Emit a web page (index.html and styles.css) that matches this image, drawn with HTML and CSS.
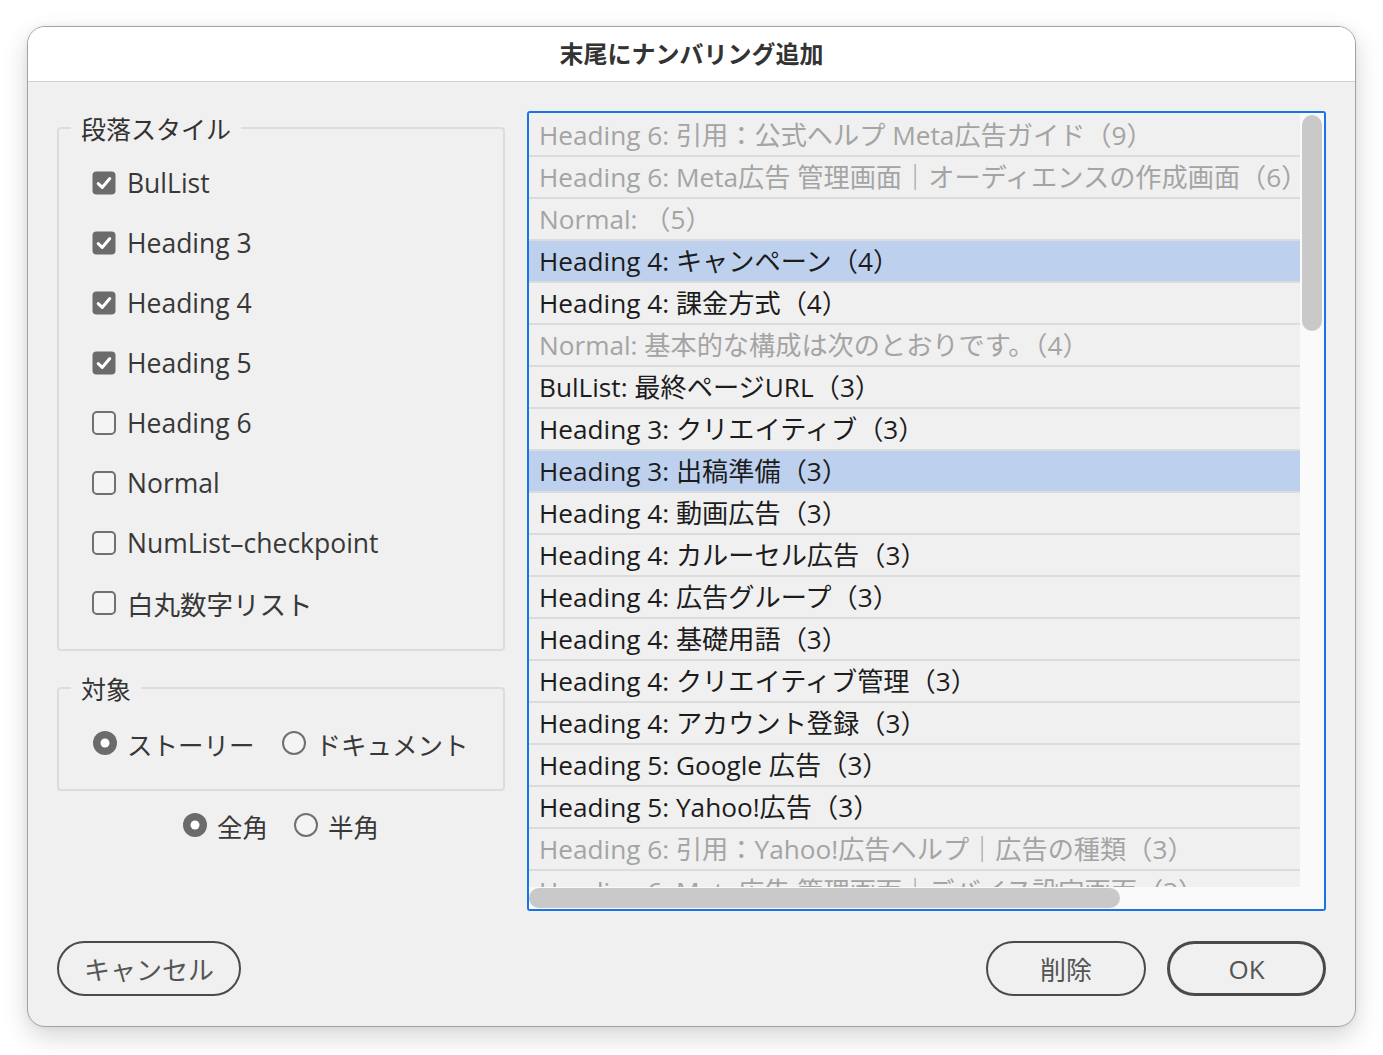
FILE: index.html
```html
<!DOCTYPE html>
<html lang="ja">
<head>
<meta charset="utf-8">
<title>末尾にナンバリング追加</title>
<link rel="stylesheet" href="styles.css">
</head>
<body>
<div class="dialog">
  <div class="titlebar">末尾にナンバリング追加</div>
  <div class="body">
    <div class="main">
      <div class="left">
        <fieldset class="group styles">
          <legend>段落スタイル</legend>
          <label class="check"><span class="box on"><svg viewBox="0 0 24 24" width="24" height="24"><rect x="0.5" y="0.5" width="23" height="23" rx="4" fill="#6b6b6b"/><path d="M6.2 12.6 L10.2 16.4 L17.8 7.6" fill="none" stroke="#fff" stroke-width="3" stroke-linecap="round" stroke-linejoin="round"/></svg></span>BulList</label>
          <label class="check"><span class="box on"><svg viewBox="0 0 24 24" width="24" height="24"><rect x="0.5" y="0.5" width="23" height="23" rx="4" fill="#6b6b6b"/><path d="M6.2 12.6 L10.2 16.4 L17.8 7.6" fill="none" stroke="#fff" stroke-width="3" stroke-linecap="round" stroke-linejoin="round"/></svg></span>Heading 3</label>
          <label class="check"><span class="box on"><svg viewBox="0 0 24 24" width="24" height="24"><rect x="0.5" y="0.5" width="23" height="23" rx="4" fill="#6b6b6b"/><path d="M6.2 12.6 L10.2 16.4 L17.8 7.6" fill="none" stroke="#fff" stroke-width="3" stroke-linecap="round" stroke-linejoin="round"/></svg></span>Heading 4</label>
          <label class="check"><span class="box on"><svg viewBox="0 0 24 24" width="24" height="24"><rect x="0.5" y="0.5" width="23" height="23" rx="4" fill="#6b6b6b"/><path d="M6.2 12.6 L10.2 16.4 L17.8 7.6" fill="none" stroke="#fff" stroke-width="3" stroke-linecap="round" stroke-linejoin="round"/></svg></span>Heading 5</label>
          <label class="check"><span class="box"><svg viewBox="0 0 24 24" width="24" height="24"><rect x="1" y="1" width="22" height="22" rx="4" fill="#f4f4f4" stroke="#707070" stroke-width="2"/></svg></span>Heading 6</label>
          <label class="check"><span class="box"><svg viewBox="0 0 24 24" width="24" height="24"><rect x="1" y="1" width="22" height="22" rx="4" fill="#f4f4f4" stroke="#707070" stroke-width="2"/></svg></span>Normal</label>
          <label class="check"><span class="box"><svg viewBox="0 0 24 24" width="24" height="24"><rect x="1" y="1" width="22" height="22" rx="4" fill="#f4f4f4" stroke="#707070" stroke-width="2"/></svg></span>NumList–checkpoint</label>
          <label class="check"><span class="box"><svg viewBox="0 0 24 24" width="24" height="24"><rect x="1" y="1" width="22" height="22" rx="4" fill="#f4f4f4" stroke="#707070" stroke-width="2"/></svg></span>白丸数字リスト</label>
        </fieldset>
        <fieldset class="group target">
          <legend>対象</legend>
          <div class="radios">
            <label class="radio"><svg viewBox="0 0 24 24" width="24" height="24"><circle cx="12" cy="12" r="12" fill="#6b6b6b"/><circle cx="12" cy="12" r="4.5" fill="#fff"/></svg>ストーリー</label>
            <label class="radio"><svg viewBox="0 0 24 24" width="24" height="24"><circle cx="12" cy="12" r="11" fill="#f4f4f4" stroke="#707070" stroke-width="2"/></svg>ドキュメント</label>
          </div>
        </fieldset>
        <div class="radios width">
          <label class="radio"><svg viewBox="0 0 24 24" width="24" height="24"><circle cx="12" cy="12" r="12" fill="#6b6b6b"/><circle cx="12" cy="12" r="4.5" fill="#fff"/></svg>全角</label>
          <label class="radio"><svg viewBox="0 0 24 24" width="24" height="24"><circle cx="12" cy="12" r="11" fill="#f4f4f4" stroke="#707070" stroke-width="2"/></svg>半角</label>
        </div>
      </div>
      <div class="list">
        <div class="rows">
          <div class="row dim">Heading 6: 引用：公式ヘルプ Meta広告ガイド（9）</div>
          <div class="row dim">Heading 6: Meta広告 管理画面｜オーディエンスの作成画面（6）</div>
          <div class="row dim">Normal: （5）</div>
          <div class="row sel">Heading 4: キャンペーン（4）</div>
          <div class="row">Heading 4: 課金方式（4）</div>
          <div class="row dim">Normal: 基本的な構成は次のとおりです。（4）</div>
          <div class="row">BulList: 最終ページURL（3）</div>
          <div class="row">Heading 3: クリエイティブ（3）</div>
          <div class="row sel">Heading 3: 出稿準備（3）</div>
          <div class="row">Heading 4: 動画広告（3）</div>
          <div class="row">Heading 4: カルーセル広告（3）</div>
          <div class="row">Heading 4: 広告グループ（3）</div>
          <div class="row">Heading 4: 基礎用語（3）</div>
          <div class="row">Heading 4: クリエイティブ管理（3）</div>
          <div class="row">Heading 4: アカウント登録（3）</div>
          <div class="row">Heading 5: Google 広告（3）</div>
          <div class="row">Heading 5: Yahoo!広告（3）</div>
          <div class="row dim">Heading 6: 引用：Yahoo!広告ヘルプ｜広告の種類（3）</div>
          <div class="row dim">Heading 6: Meta広告 管理画面｜デバイス設定画面（3）</div>
        </div>
        <div class="vtrack"><div class="vthumb"></div></div>
        <div class="htrack"><div class="hthumb"></div></div>
        <div class="corner"></div>
      </div>
    </div>
    <div class="buttons">
      <button class="btn cancel">キャンセル</button>
      <div class="right-buttons">
        <button class="btn del">削除</button>
        <button class="btn ok">OK</button>
      </div>
    </div>
  </div>
</div>
</body>
</html>
```
FILE: styles.css
```css
html, body {
  margin: 0;
  padding: 0;
  background: #ffffff;
}
body {
  padding: 26px 27px;
  font-family: "Open Sans", "Noto Sans CJK JP", sans-serif;
  color: #333333;
}
.dialog {
  width: 1329px;
  height: 1001px;
  box-sizing: border-box;
  border: 1px solid #a3a3a3;
  border-radius: 18px;
  background: #f0f0f0;
  overflow: hidden;
  box-shadow: 0 10px 26px rgba(0, 0, 0, 0.16), 0 0 6px rgba(0, 0, 0, 0.06);
  display: flex;
  flex-direction: column;
}
.titlebar {
  height: 55px;
  background: #ffffff;
  border-bottom: 1px solid #d2d2d2;
  display: flex;
  align-items: center;
  justify-content: center;
  font-family: "Noto Sans CJK JP", sans-serif;
  font-weight: 700;
  font-size: 24px;
  color: #333333;
  padding-bottom: 3px;
  box-sizing: border-box;
}
.body {
  flex: 1;
  padding: 29px 29px 29px 29px;
  display: flex;
  flex-direction: column;
  gap: 30px;
}
.main {
  height: 800px;
  display: flex;
  gap: 22px;
}
.left {
  width: 448px;
  padding-top: 2px;
  display: flex;
  flex-direction: column;
}
.group {
  margin: 0;
  border: 2px solid #dcdcdc;
  border-radius: 4px;
  min-width: 0;
}
.group legend {
  font-family: "Noto Sans CJK JP", sans-serif;
  font-size: 25px;
  line-height: 30px;
  padding: 0 10px;
  color: #333333;
}
.styles {
  padding: 10px 0 16px 33px;
}
.styles legend { margin-left: -21px; }
.check {
  height: 60px;
  display: flex;
  align-items: center;
  gap: 11px;
  font-size: 26.5px;
  color: #383838;
}
.box {
  width: 24px;
  height: 24px;
  display: block;
}
.box svg { display: block; }
.target {
  margin-top: 22px;
  padding: 25px 0 31px 34px;
}
.target legend { margin-left: -22px; }
.radios {
  display: flex;
  align-items: center;
  gap: 27px;
  height: 30px;
}
.radio {
  display: flex;
  align-items: center;
  gap: 10px;
  font-family: "Noto Sans CJK JP", sans-serif;
  font-size: 25.5px;
  color: #383838;
}
.radio svg { display: block; }
.width {
  justify-content: center;
  margin-top: 19px;
  gap: 26px;
}
.list {
  width: 799px;
  height: 800px;
  box-sizing: border-box;
  border: 2px solid #1a73e8;
  border-radius: 3px;
  background: #fafafa;
  display: grid;
  grid-template-columns: 1fr 24px;
  grid-template-rows: 1fr 22px;
  overflow: hidden;
}
.rows {
  padding-top: 2px;
  overflow: hidden;
  background: #f0f0f0;
}
.row {
  height: 40px;
  line-height: 40px;
  border-bottom: 2px solid #dcdcdc;
  padding-left: 10px;
  white-space: nowrap;
  font-size: 26.2px;
  color: #1c1c1c;
}
.row.dim { color: #a4a4a4; }
.row.sel { background: #bdd1ee; }
.vtrack {
  background: #fafafa;
  padding: 2px 2px 0 2px;
}
.vthumb {
  width: 20px;
  height: 216px;
  border-radius: 10px;
  background: #c9c9c9;
}
.htrack {
  background: #fafafa;
  padding-top: 1px;
}
.hthumb {
  width: 591px;
  height: 20px;
  border-radius: 10px;
  background: #c9c9c9;
}
.corner { background: #fafafa; }
.buttons {
  height: 55px;
  display: flex;
  justify-content: space-between;
}
.right-buttons {
  display: flex;
  gap: 21px;
}
.btn {
  height: 55px;
  box-sizing: border-box;
  border: 2px solid #4a4a4a;
  border-radius: 28px;
  background: transparent;
  font-family: "Open Sans", "Noto Sans CJK JP", sans-serif;
  font-size: 26px;
  color: #555555;
  padding: 0;
}
.cancel { width: 184px; }
.del { width: 160px; }
.ok { width: 159px; border-width: 3px; }
```
